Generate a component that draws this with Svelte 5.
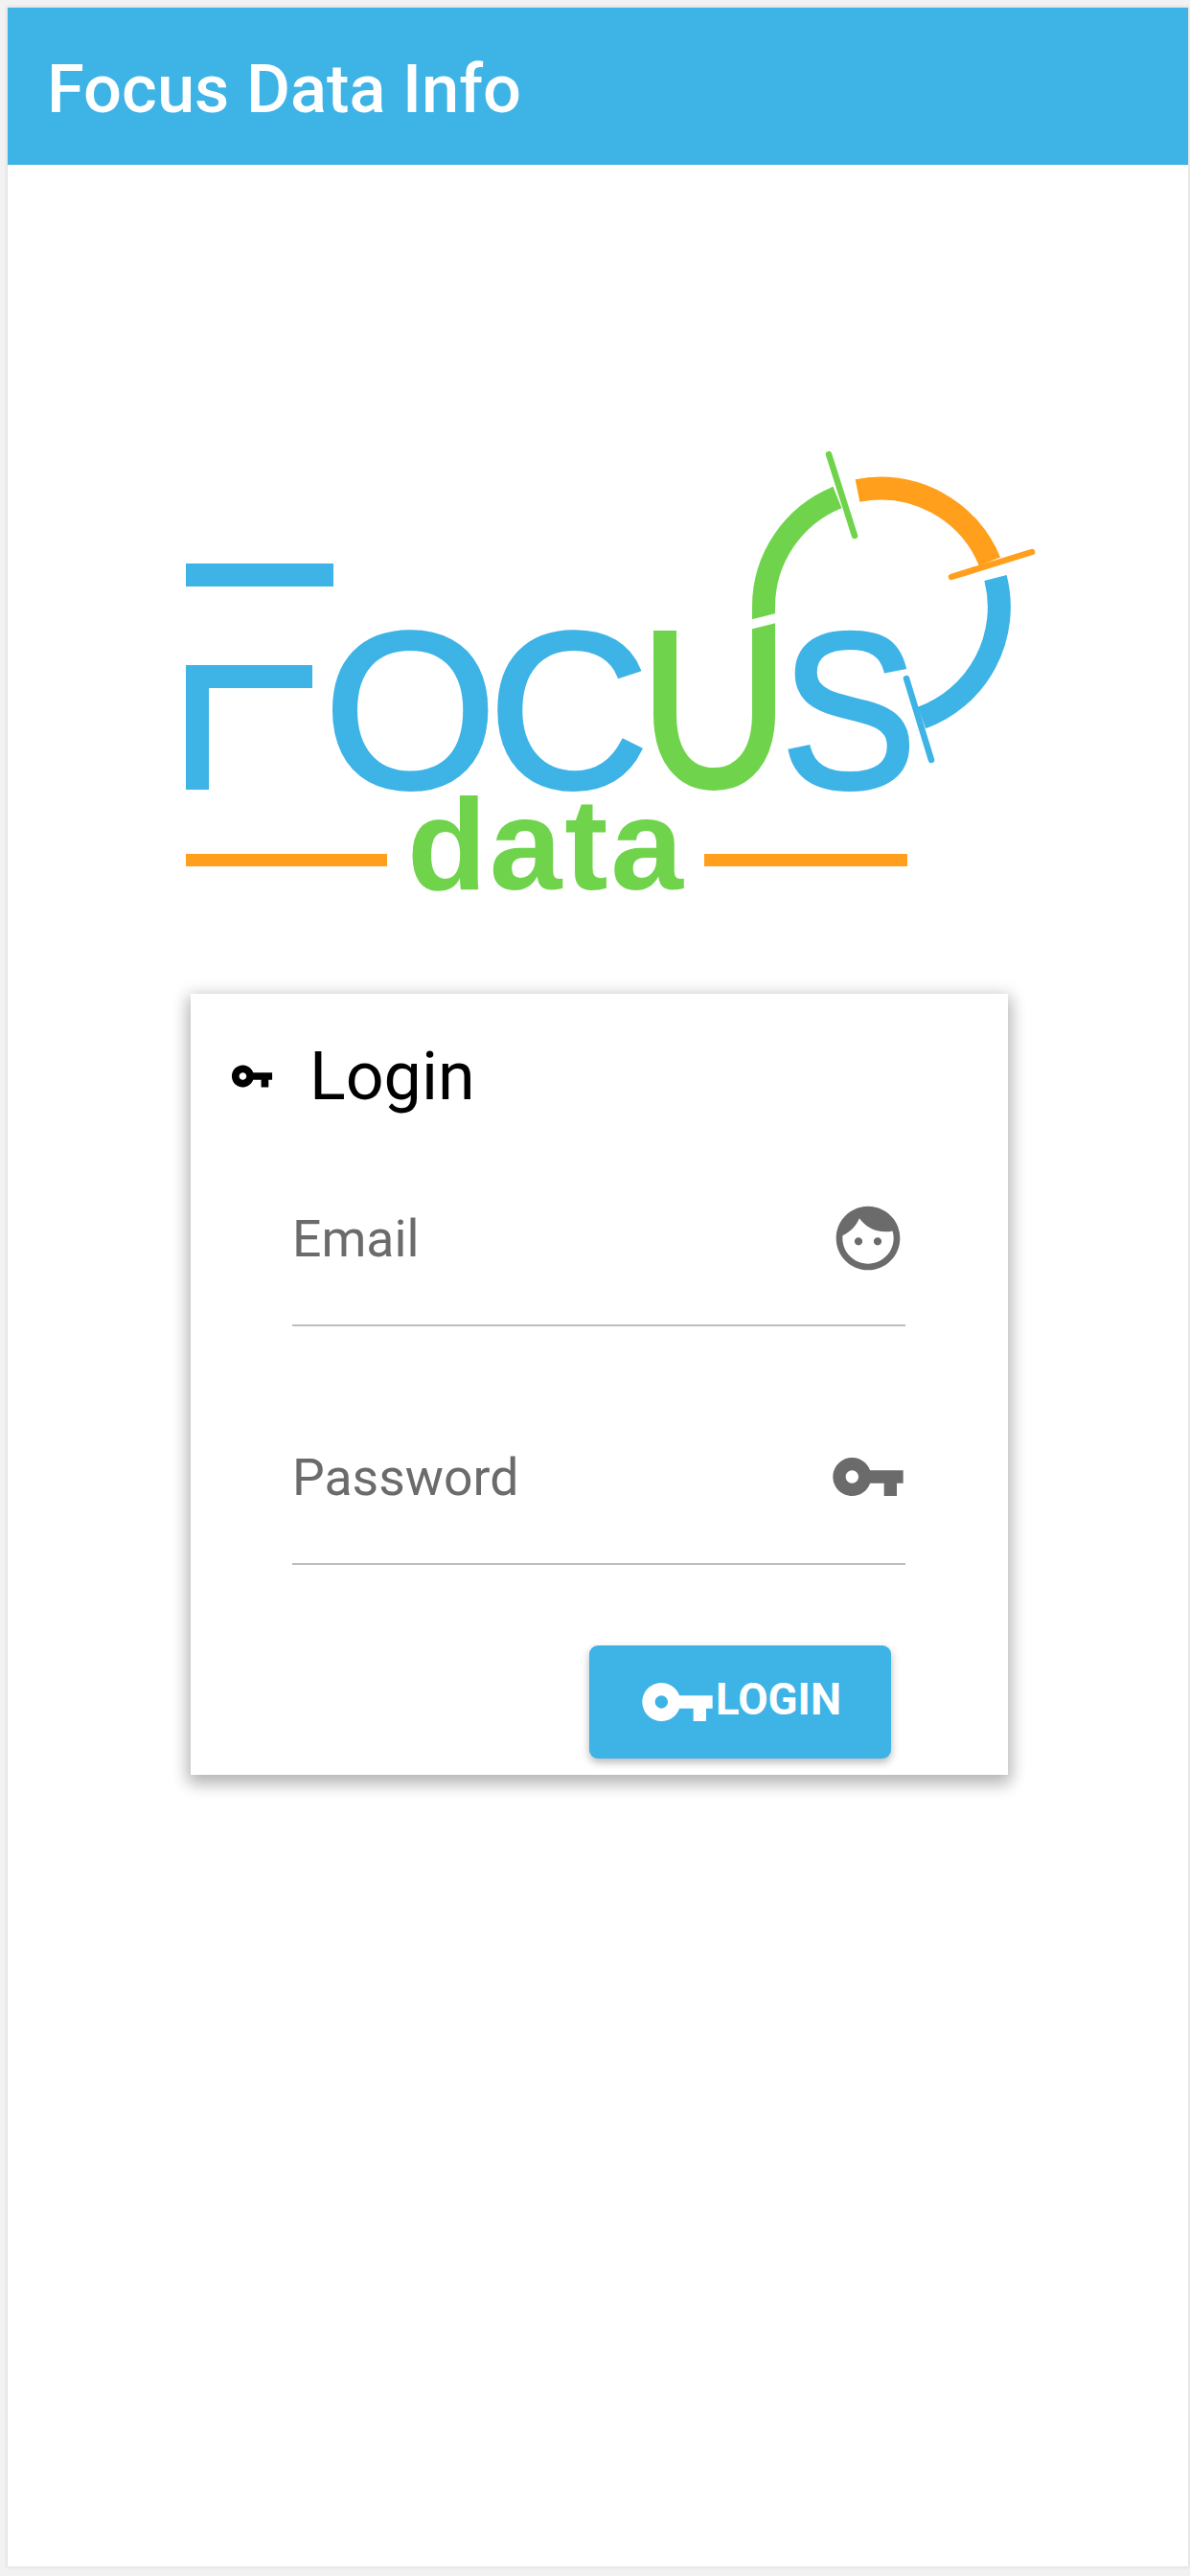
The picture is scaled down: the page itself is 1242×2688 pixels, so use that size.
<script>
  const keyPath = "M12.65 10C11.83 7.67 9.61 6 7 6c-3.31 0-6 2.69-6 6s2.69 6 6 6c2.61 0 4.83-1.67 5.65-4H17v4h4v-4h2v-4H12.65zM7 14c-1.1 0-2-.9-2-2s.9-2 2-2 2 .9 2 2-.9 2-2 2z";
  const facePath = "M9 11.75c-.69 0-1.25.56-1.25 1.25s.56 1.25 1.25 1.25 1.25-.56 1.25-1.25-.56-1.25-1.25-1.25zm6 0c-.69 0-1.25.56-1.25 1.25s.56 1.25 1.25 1.25 1.25-.56 1.25-1.25-.56-1.25-1.25-1.25zM12 2C6.48 2 2 6.48 2 12s4.48 10 10 10 10-4.48 10-10S17.52 2 12 2zm0 18c-4.41 0-8-3.59-8-8 0-.29.02-.58.05-.86 2.36-1.05 4.23-2.98 5.21-5.37C11.07 8.33 14.05 10 17.42 10c.78 0 1.53-.09 2.25-.26.21.71.33 1.47.33 2.26 0 4.41-3.59 8-8 8z";
</script>

<div class="page">
  <div class="shell">
    <header class="bar">Focus Data Info</header>
    <main class="main">
      <svg class="logo" viewBox="190 470 900 470" role="img" aria-label="Focus data logo">
        <g fill="#3db3e6">
          <rect x="194" y="588" width="154" height="24" />
          <rect x="194" y="694" width="132" height="24" />
          <rect x="194" y="694" width="24" height="130" />
          <text class="word" x="338" y="822" letter-spacing="-9">OC</text>
          <text class="word" x="815" y="822" textLength="142" lengthAdjust="spacingAndGlyphs">S</text>
        </g>
        <g fill="none" stroke-width="24">
          <path stroke="#6fd44c" d="M694 658V745C694 790 715 813 745 813C775 813 797 790 797 745V633A123 123 0 0 1 874 519" />
          <path stroke="#ff9f1c" d="M895 512A123 123 0 0 1 1033 586" />
          <path stroke="#3db3e6" d="M1039 603A123 123 0 0 1 962 749" />
        </g>
        <line x1="778" y1="653" x2="818" y2="643" stroke="#fff" stroke-width="10" />
        <g stroke-width="6.5" stroke-linecap="round">
          <line x1="865" y1="474" x2="892" y2="559" stroke="#6fd44c" />
          <line x1="993" y1="602" x2="1077" y2="576" stroke="#ff9f1c" />
          <line x1="946" y1="708" x2="972" y2="793" stroke="#3db3e6" />
        </g>
        <rect x="194" y="891" width="210" height="13" fill="#ff9f1c" />
        <rect x="735" y="891" width="212" height="13" fill="#ff9f1c" />
        <text class="data" x="425" y="928" textLength="288" lengthAdjust="spacing">data</text>
      </svg>

      <section class="card">
        <h2 class="title">
          <svg class="title-icon" viewBox="0 0 24 24"><path d={keyPath} /></svg>
          <span>Login</span>
        </h2>
        <form class="form">
          <label class="field">
            <input type="email" placeholder="Email" />
            <svg class="field-icon" viewBox="0 0 24 24"><path d={facePath} /></svg>
          </label>
          <label class="field">
            <input type="password" placeholder="Password" />
            <svg class="field-icon" viewBox="0 0 24 24"><path d={keyPath} /></svg>
          </label>
          <div class="actions">
            <button class="btn" type="button">
              <svg class="btn-icon" viewBox="0 0 24 24"><path d={keyPath} /></svg>
              <span class="btn-label">LOGIN</span>
            </button>
          </div>
        </form>
      </section>
    </main>
  </div>
</div>

<style>
  :global(body) {
    margin: 0;
    background: #f2f2f2;
    font-family: Roboto, "Liberation Sans", sans-serif;
  }
  .page {
    box-sizing: border-box;
    height: 2688px;
    padding: 8px 2px 10px 8px;
  }
  .shell {
    height: 100%;
    box-sizing: border-box;
    background: #fff;
    box-shadow: 0 0 3px 1px #dcdcdc;
    display: flex;
    flex-direction: column;
  }
  .bar {
    height: 164px;
    background: #3db3e6;
    color: #fff;
    font-size: 70.5px;
    font-weight: 500;
    line-height: 170px;
    padding-left: 41px;
    flex: none;
  }
  .main {
    display: flex;
    flex-direction: column;
    flex: 1;
  }
  .logo {
    display: block;
    width: 900px;
    height: 470px;
    margin: 298px 0 0 182px;
  }
  .word {
    font-family: "Liberation Sans", sans-serif;
    font-size: 232px;
    stroke: #3db3e6;
    stroke-width: 4px;
  }
  .data {
    font-family: "Liberation Sans", sans-serif;
    font-weight: 700;
    font-size: 136px;
    fill: #6fd44c;
  }
  .card {
    box-sizing: border-box;
    width: 853px;
    height: 815px;
    margin: 97px 0 0 191px;
    background: #fff;
    box-shadow: 0 8px 16px 2px rgba(0, 0, 0, .2), 0 3px 16px 4px rgba(0, 0, 0, .13);
    display: flex;
    flex-direction: column;
  }
  .title {
    margin: 45px 0 0;
    display: flex;
    align-items: center;
    height: 82px;
    padding-left: 41px;
    font-size: 70px;
    font-weight: 400;
    color: #000;
  }
  .title-icon {
    width: 46px;
    height: 46px;
    margin-right: 37px;
    fill: #000;
    flex: none;
  }
  .form {
    display: flex;
    flex-direction: column;
    padding: 0 107px 17px 106px;
    flex: 1;
  }
  .field {
    display: flex;
    align-items: center;
    height: 180px;
    border-bottom: 2px solid #bdbdbd;
    box-sizing: content-box;
    margin-top: 67px;
  }
  .field:first-child {
    margin-top: 38px;
  }
  .field input {
    flex: 1;
    min-width: 0;
    border: 0;
    outline: 0;
    padding: 0;
    background: transparent;
    font-family: inherit;
    font-size: 53.5px;
    color: #222;
  }
  .field input::placeholder {
    color: #6b6b6b;
    opacity: 1;
  }
  .field-icon {
    width: 80px;
    height: 80px;
    fill: #6b6b6b;
    flex: none;
    margin-right: -1px;
  }
  .actions {
    margin-top: auto;
    display: flex;
    justify-content: flex-end;
    padding-right: 15px;
  }
  .btn {
    box-sizing: border-box;
    width: 315px;
    height: 118px;
    border: 0;
    border-radius: 9px;
    background: #3db3e6;
    color: #fff;
    font-family: inherit;
    font-size: 45.5px;
    font-weight: 700;
    display: flex;
    align-items: center;
    justify-content: center;
    padding: 0;
    box-shadow: 0 4px 8px rgba(0, 0, 0, .28);
  }
  .btn-icon {
    width: 80px;
    height: 80px;
    fill: #fff;
    flex: none;
  }
  .btn-label {
    margin-bottom: 6px;
  }
</style>
